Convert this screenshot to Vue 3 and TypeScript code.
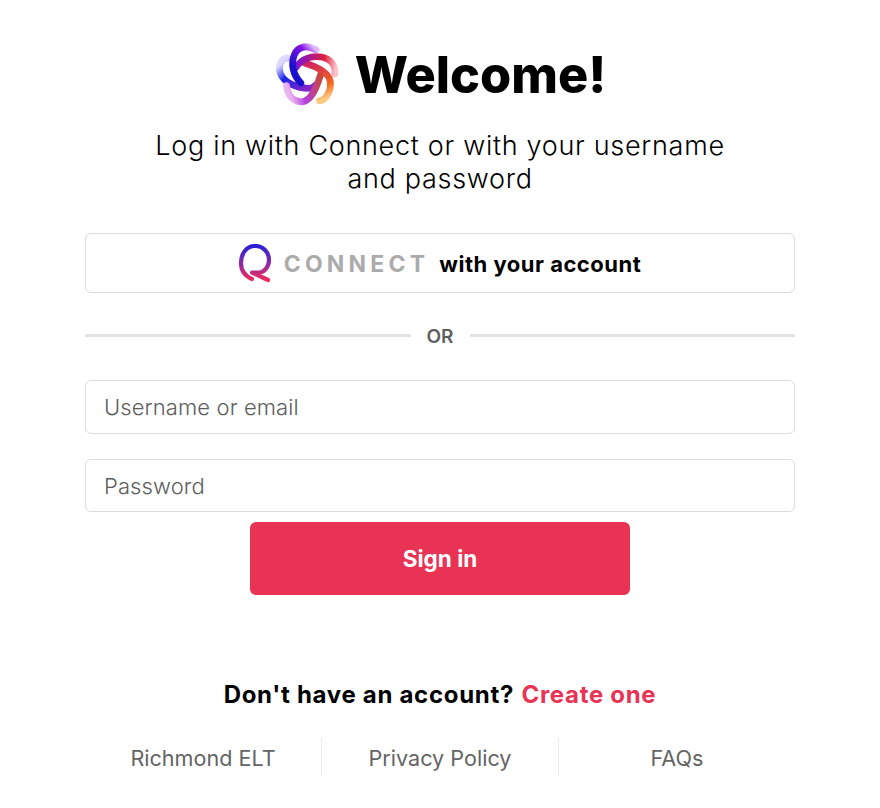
<script setup lang="ts">
const links: string[] = ['Richmond ELT', 'Privacy Policy', 'FAQs']
const petals = [
  { id: 'p2', d: 'M24 26C17 27 13 35 16 43C20 54 35 60 48 60C52 60 54 59 56 56', from: '#dcdaff', mid: '#1a26e6', to: '#9a25c4', x1: 25, y1: 26, x2: 54, y2: 60 },
  { id: 'p3', d: 'M23 57C24 66 29 74 38 75C46 76 52 68 56 59C59 52 60 48 62 42', from: '#eab4f0', mid: '#b23fdc', to: '#c9482a', x1: 23, y1: 57, x2: 62, y2: 42 },
  { id: 'p4', d: 'M60 74C68 73 73 62 72 53C71 44 60 37 44 32', from: '#fbcb85', mid: '#f2661f', to: '#d01f62', x1: 60, y1: 74, x2: 44, y2: 32 },
  { id: 'p5', d: 'M77 44C78 34 72 27 62 25C51 23 40 27 33 37', from: '#fbc4cc', mid: '#e0213f', to: '#7a14d8', x1: 77, y1: 44, x2: 33, y2: 37 },
  { id: 'p1', d: 'M56 17C46 11 36 13 32 22C27 33 31 46 39 54', from: '#e0baf9', mid: '#8512e6', to: '#1a10cc', x1: 56, y1: 17, x2: 32, y2: 38 }
]
</script>

<template>
  <main class="page">
    <header class="head">
      <svg class="logo" viewBox="9 6 76 76" width="68" height="68" aria-hidden="true">
        <defs>
          <linearGradient v-for="p in petals" :id="p.id" :key="p.id" gradientUnits="userSpaceOnUse" :x1="p.x1" :y1="p.y1" :x2="p.x2" :y2="p.y2">
            <stop offset="0" :stop-color="p.from" />
            <stop offset="0.32" :stop-color="p.mid" />
            <stop offset="1" :stop-color="p.to" />
          </linearGradient>
        </defs>
        <path v-for="p in petals" :key="p.d" :d="p.d" fill="none" :stroke="`url(#${p.id})`" stroke-width="7.6" stroke-linecap="round" />
      </svg>
      <h1>Welcome!</h1>
    </header>
    <p class="sub">Log in with Connect or with your username<br />and password</p>

    <button class="connect" type="button">
      <svg class="r" viewBox="0 0 36 40" width="36" height="40" aria-hidden="true">
        <defs>
          <linearGradient id="rg" x1="0" y1="0" x2="0" y2="1">
            <stop offset="0" stop-color="#2a1fd6" />
            <stop offset="0.5" stop-color="#8a2aa8" />
            <stop offset="1" stop-color="#ee2a5c" />
          </linearGradient>
        </defs>
        <path d="M15 35C8 32 4 26 4 19C4 9 10 2 18 2C26 2 32 8 32 16C32 23 27 28.500 22 28.500L15 28.500L31 36" fill="none" stroke="url(#rg)" stroke-width="4.200" stroke-linecap="round" stroke-linejoin="round" />
      </svg>
      <span class="brand">CONNECT</span>
      <span class="with">with your account</span>
    </button>

    <div class="or"><span>OR</span></div>

    <input class="field first" type="text" placeholder="Username or email" />
    <input class="field second" type="password" placeholder="Password" />
    <button class="signin" type="button">Sign in</button>

    <p class="create">Don't have an account? <a href="#">Create one</a></p>

    <nav class="foot">
      <a v-for="l in links" :key="l" href="#">{{ l }}</a>
    </nav>
  </main>
</template>

<style scoped>
.page {
  width: 880px;
  height: 808px;
  box-sizing: border-box;
  padding: 38px 85px 0;
  background: #fff;
  display: flex;
  flex-direction: column;
  font-family: "Inter", "Noto Sans", sans-serif;
  color: #000;
}
.head {
  display: flex;
  justify-content: center;
  align-items: center;
  gap: 13px;
  height: 72px;
}
h1 {
  margin: 0;
  padding-top: 2px;
  font-size: 50.4px;
  line-height: 72px;
  font-weight: 800;
}
.sub {
  margin: 19px 0 0;
  text-align: center;
  font-size: 27px;
  line-height: 33px;
  font-weight: 300;
  letter-spacing: 0.7px;
}
.connect {
  margin-top: 38px;
  height: 60px;
  border: 1px solid #dcdcdc;
  border-radius: 6px;
  background: #fff;
  display: flex;
  align-items: center;
  justify-content: center;
  font-family: inherit;
  padding: 2px 2px 0 0;
}
.r { margin-right: 11px; }
.brand {
  font-size: 23px;
  font-weight: 700;
  letter-spacing: 4.2px;
  color: #ababab;
  margin-right: 10px;
}
.with {
  font-size: 22px;
  font-weight: 700;
  letter-spacing: 0.5px;
  color: #000;
}
.or {
  margin-top: 30px;
  height: 26px;
  display: flex;
  align-items: center;
  gap: 16px;
  color: #5f5f5f;
  font-size: 19px;
  font-weight: 600;
}
.or::before,
.or::after {
  content: "";
  flex: 1;
  height: 3px;
  margin-bottom: 2px;
  background: #e2e2e2;
}
.field {
  box-sizing: border-box;
  width: 100%;
  border: 1px solid #dcdcdc;
  border-radius: 6px;
  background: #fff;
  padding: 0 18px;
  font-family: inherit;
  font-size: 22px;
  font-weight: 300;
  letter-spacing: 0.1px;
  color: #333;
  outline: none;
}
.field::placeholder { color: #5c5c5c; opacity: 1; }
.first { margin-top: 31px; height: 54px; }
.second { margin-top: 25px; height: 53px; }
.signin {
  align-self: center;
  margin-top: 10px;
  width: 380px;
  height: 73px;
  border: 0;
  border-radius: 6px;
  padding: 0;
  background: #e93355;
  color: #fff;
  font-family: inherit;
  font-size: 22.5px;
  font-weight: 700;
}
.create {
  margin: 84px 0 0;
  text-align: center;
  font-size: 24px;
  line-height: 32px;
  font-weight: 700;
  letter-spacing: 0.7px;
}
.create a { color: #e93355; text-decoration: none; margin-left: 1px; }
.foot {
  margin-top: 27px;
  display: grid;
  grid-template-columns: 236px 237px 237px;
}
.foot a {
  height: 38px;
  line-height: 41px;
  text-align: center;
  color: #646464;
  font-size: 21.6px;
  text-decoration: none;
}
.foot a + a { border-left: 1px solid #ececec; }
</style>
